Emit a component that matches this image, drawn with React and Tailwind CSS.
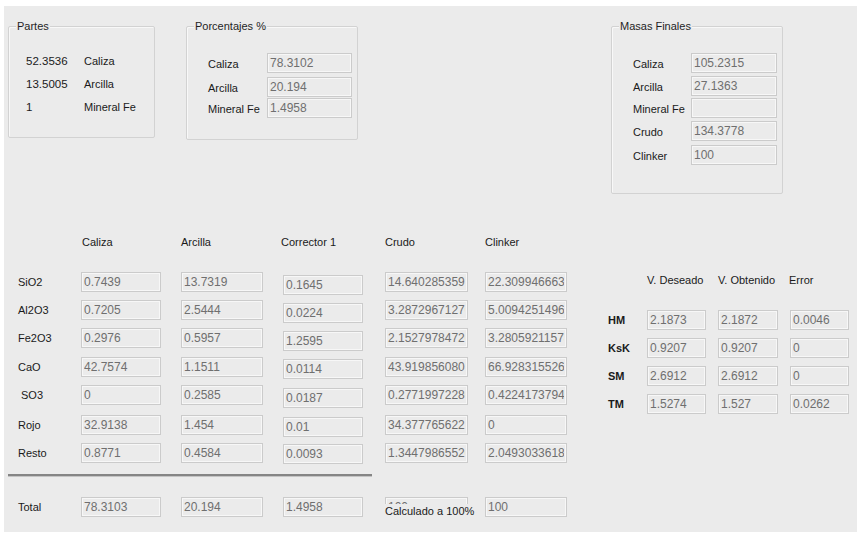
import React from "react";

const Box = ({ value, className = "" }) => (
  <input
    readOnly
    value={value}
    className={`block h-[20px] border border-[#cbcbcb] bg-[#ebebeb] px-[2px] text-[12px] text-[#6f6f6f] outline-none shadow-[inset_0_0_0_1px_#f7f7f7] ${className}`}
  />
);

const Group = ({ title, className = "", children }) => (
  <div className={`rounded-[2px] border border-[#d2d2d2] shadow-[inset_1px_1px_0_#f8f8f8] ${className}`}>
    <span className="ml-[7px] -mt-[8px] block w-fit bg-[#ebebeb] px-px leading-[14px] text-[#1f1f1f]">
      {title}
    </span>
    {children}
  </div>
);

const rows = [
  { name: "SiO2", mt: "mt-[23px]", cor: "mt-[3px]", v: ["0.7439", "13.7319", "0.1645", "14.6402853597264", "22.3099466633217"] },
  { name: "Al2O3", mt: "mt-[8px]", cor: "mt-[3px]", v: ["0.7205", "2.5444", "0.0224", "3.28729671270121", "5.00942514968341"] },
  { name: "Fe2O3", mt: "mt-[8px]", cor: "mt-[3px]", v: ["0.2976", "0.5957", "1.2595", "2.15279784720315", "3.28059211578842"] },
  { name: "CaO", mt: "mt-[9px]", cor: "mt-[2px]", v: ["42.7574", "1.1511", "0.0114", "43.9198560801234", "66.9283155268871"] },
  { name: "SO3", mt: "mt-[8px]", cor: "mt-[3px]", pad: "pl-[3px]", v: ["0", "0.2585", "0.0187", "0.27719972280112", "0.42241737945561"] },
  { name: "Rojo", mt: "mt-[10px]", cor: "mt-[2px]", v: ["32.9138", "1.454", "0.01", "34.3777656222671", "0"] },
  { name: "Resto", mt: "mt-[8px]", cor: "mt-px", v: ["0.8771", "0.4584", "0.0093", "1.34479865520443", "2.04930336181123"] },
];

const ratios = [
  ["HM", "2.1873", "2.1872", "0.0046"],
  ["KsK", "0.9207", "0.9207", "0"],
  ["SM", "2.6912", "2.6912", "0"],
  ["TM", "1.5274", "1.527", "0.0262"],
];

const cols = "grid grid-cols-[63px_100px_102px_102px_100px_82px] items-start";

export default function App() {
  return (
    <div className="min-h-screen bg-white pt-[6px] pl-[4px] font-['Liberation_Sans',Arial,sans-serif] text-[11px] text-[#1a1a1a]">
      <div className="flex h-[526px] w-[853px] flex-col bg-[#ebebeb]">
        {/* top group boxes */}
        <div className="flex items-start pt-[20px] pl-[4px]">
          <Group title="Partes" className="h-[112px] w-[147px]">
            <div className="mt-[21px] grid grid-cols-[58px_auto] gap-y-[9px] pl-[17px] leading-[14px]">
              <span className="text-[11.5px]">52.3536</span><span>Caliza</span>
              <span className="text-[11.5px]">13.5005</span><span>Arcilla</span>
              <span className="text-[11.5px]">1</span><span>Mineral Fe</span>
            </div>
          </Group>

          <Group title="Porcentajes %" className="ml-[31px] h-[114px] w-[172px]">
            <div className="pl-[21px]">
              {[["Caliza", "78.3102", "mt-[20px]"], ["Arcilla", "20.194", "mt-[4px]"], ["Mineral Fe", "1.4958", "mt-px"]].map(([l, v, m]) => (
                <div key={l} className={`flex items-center ${m}`}>
                  <span className="w-[59px] pt-[2px] leading-[14px]">{l}</span>
                  <Box value={v} className="w-[85px]" />
                </div>
              ))}
            </div>
          </Group>

          <Group title="Masas Finales" className="ml-[253px] h-[168px] w-[172px]">
            <div className="pl-[21px]">
              {[["Caliza", "105.2315", "mt-[20px]"], ["Arcilla", "27.1363", "mt-[3px]"], ["Mineral Fe", "", "mt-[2px]"], ["Crudo", "134.3778", "mt-[3px]"], ["Clinker", "100", "mt-[4px]"]].map(([l, v, m]) => (
                <div key={l} className={`flex items-center ${m}`}>
                  <span className="w-[58px] pt-[2px] leading-[14px]">{l}</span>
                  <Box value={v} className="w-[86px]" />
                </div>
              ))}
            </div>
          </Group>
        </div>

        {/* bottom tables */}
        <div className="flex items-start">
          <div className="pl-[4px]">
            <div className={`${cols} mt-[41px] pl-[10px] leading-[14px]`}>
              <span />
              <span className="pl-px">Caliza</span>
              <span>Arcilla</span>
              <span className="-ml-[2px]">Corrector 1</span>
              <span>Crudo</span>
              <span>Clinker</span>
            </div>

            {rows.map((r) => (
              <div key={r.name} className={`${cols} ${r.mt} h-[20px] pl-[10px]`}>
                <span className={`pt-[3px] leading-[14px] ${r.pad || ""}`}>{r.name}</span>
                <Box value={r.v[0]} className="w-[80px]" />
                <Box value={r.v[1]} className="w-[82px]" />
                <Box value={r.v[2]} className={`w-[80px] ${r.cor}`} />
                <Box value={r.v[3]} className="w-[83px]" />
                <Box value={r.v[4]} className="w-[82px]" />
              </div>
            ))}

            <div className="mt-[11px] h-[3px] w-[364px] border-t-2 border-b border-t-[#858585] border-b-[#c4c4c4]" />

            <div className={`${cols} mt-[20px] h-[20px] pl-[10px]`}>
              <span className="pt-[3px] leading-[14px]">Total</span>
              <Box value="78.3103" className="w-[80px]" />
              <Box value="20.194" className="w-[82px]" />
              <Box value="1.4958" className="w-[80px]" />
              <div className="relative">
                <Box value="100" className="w-[83px]" />
                <span className="absolute top-[7px] left-0 bg-[#ebebeb] pr-[2px] leading-[14px] whitespace-nowrap">
                  Calculado a 100%
                </span>
              </div>
              <Box value="100" className="w-[82px]" />
            </div>
          </div>

          <div className="ml-[41px]">
            <div className="mt-[79px] grid grid-cols-[39px_71px_72px_59px] leading-[14px]">
              <span />
              <span>V. Deseado</span>
              <span>V. Obtenido</span>
              <span className="-ml-px">Error</span>
            </div>
            {ratios.map(([l, a, b, c], i) => (
              <div key={l} className={`grid grid-cols-[39px_71px_72px_59px] h-[20px] ${i === 0 ? "mt-[23px]" : "mt-[8px]"}`}>
                <span className="pt-[3px] font-bold leading-[14px]">{l}</span>
                <Box value={a} className="w-[59px]" />
                <Box value={b} className="w-[60px]" />
                <Box value={c} className="w-[59px]" />
              </div>
            ))}
          </div>
        </div>
      </div>
    </div>
  );
}
